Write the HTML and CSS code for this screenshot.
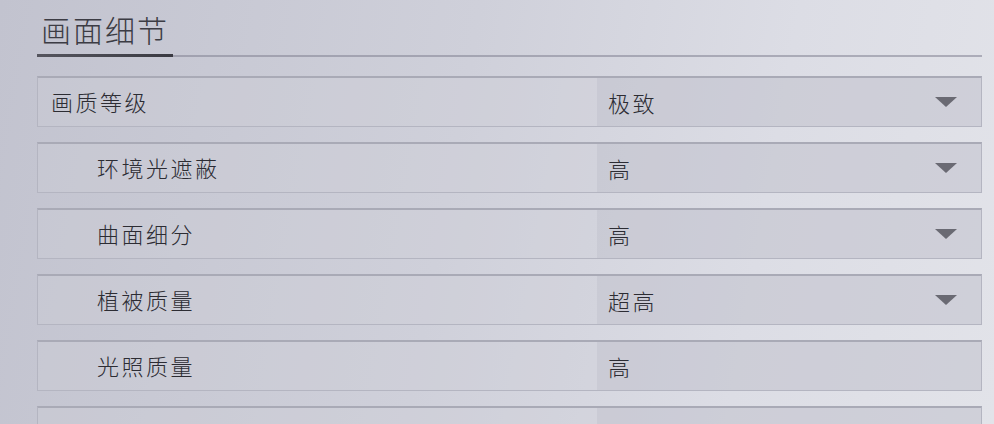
FILE: index.html
```html
<!DOCTYPE html>
<html>
<head>
  <title>画面细节</title>
  <link rel="stylesheet" href="styles.css">
</head>
<body>
  <div class="panel">
    <div class="section-head">
      <h2 class="section-title">画面细节</h2>
    </div>

    <ul class="options">
      <li class="option">
        <span class="option-name">画质等级</span>
        <div class="option-value">
          <span>极致</span>
          <span class="arrow"></span>
        </div>
      </li>
      <li class="option sub">
        <span class="option-name">环境光遮蔽</span>
        <div class="option-value">
          <span>高</span>
          <span class="arrow"></span>
        </div>
      </li>
      <li class="option sub">
        <span class="option-name">曲面细分</span>
        <div class="option-value">
          <span>高</span>
          <span class="arrow"></span>
        </div>
      </li>
      <li class="option sub">
        <span class="option-name">植被质量</span>
        <div class="option-value">
          <span>超高</span>
          <span class="arrow"></span>
        </div>
      </li>
      <li class="option sub">
        <span class="option-name">光照质量</span>
        <div class="option-value">
          <span>高</span>
        </div>
      </li>
      <li class="option sub">
        <span class="option-name"></span>
        <div class="option-value"></div>
      </li>
    </ul>
  </div>
</body>
</html>
```

FILE: styles.css
```css
html, body {
  height: 424px;
  overflow: hidden;
}

body {
  margin: 0;
  padding: 0;
  font-family: "Noto Sans CJK SC", "Noto Sans", sans-serif;
  color: #2c2c33;
  background: linear-gradient(100deg, #c2c3cf 0%, #cfd0da 45%, #dcdde5 75%, #e2e3e9 100%);
}

.panel {
  height: 424px;
  overflow: hidden;
  padding: 0 12px 0 37px;
}

.section-head {
  padding-top: 11px;
  height: 44px;
  border-bottom: 2px solid rgba(130, 130, 145, 0.55);
  position: relative;
}

/* dark strip under the active title */
.section-head::after {
  content: "";
  position: absolute;
  left: 0;
  bottom: -2px;
  width: 136px;
  height: 3px;
  background: linear-gradient(to right, #55555e, #3a3a42);
}

.section-title {
  margin: 0 0 0 4px;
  font-size: 30px;
  font-weight: 300;
  letter-spacing: 2px;
  line-height: 36px;
  color: #3c3c44;
}

.options {
  list-style-type: none;
  margin: 0;
  padding: 0;
  padding-top: 19px;
  display: flex;
  flex-direction: column;
  gap: 15px;
}

.option {
  display: flex;
  flex-shrink: 0;
  height: 51px;
  box-sizing: border-box;
  border: 1px solid #b4b5c1;
  border-top: 2px solid #a9aab6;
  background-color: rgba(205, 206, 216, 0.35);
}

.option-name {
  box-sizing: border-box;
  width: 559px;
  padding-left: 13px;
  font-size: 22px;
  font-weight: 300;
  letter-spacing: 2.5px;
  line-height: 47px;
}

.option.sub .option-name {
  padding-left: 59px;
}

.option-value {
  flex: 1;
  display: flex;
  align-items: center;
  justify-content: space-between;
  padding: 0 24px 0 11px;
  font-size: 22px;
  font-weight: 300;
  letter-spacing: 2.5px;
  background-color: rgba(180, 181, 195, 0.28);
}

.arrow {
  width: 0;
  height: 0;
  border-left: 11px solid transparent;
  border-right: 11px solid transparent;
  border-top: 10px solid #6a6a73;
}
```
